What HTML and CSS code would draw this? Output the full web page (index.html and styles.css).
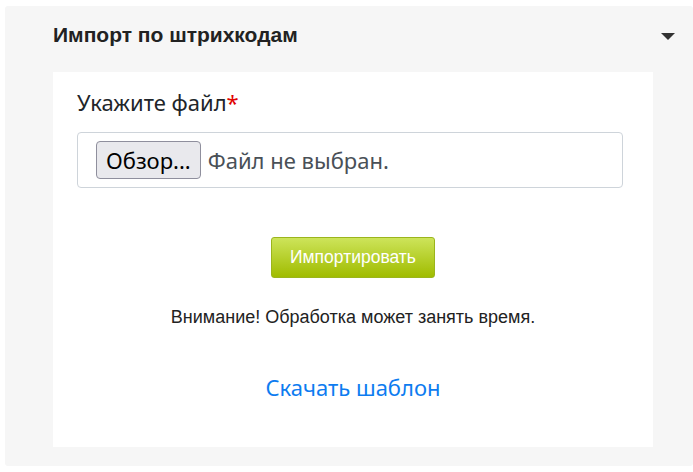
FILE: index.html
```html
<!DOCTYPE html>
<html lang="ru">
<head>
<meta charset="utf-8">
<link rel="stylesheet" href="styles.css">
</head>
<body>
<div class="panel">
  <div class="panel-header">
    <h2 class="panel-title">Импорт по штрихкодам</h2>
    <span class="caret"></span>
  </div>
  <div class="card">
    <div class="field-label">Укажите файл<span class="req">*</span></div>
    <div class="file-box">
      <span class="file-btn">Обзор...</span>
      <span class="file-name">Файл не выбран.</span>
    </div>
    <div class="actions">
      <span class="btn-import">Импортировать</span>
    </div>
    <p class="note">Внимание! Обработка может занять время.</p>
    <div class="template">
      <a class="template-link" href="#">Скачать шаблон</a>
    </div>
  </div>
</div>
</body>
</html>
```
FILE: styles.css
```css
html, body {
  margin: 0;
  padding: 0;
  background: #ffffff;
}
body {
  padding: 6px 0 0 5px;
}
.panel {
  background: #f6f6f6;
  border-radius: 3px;
  height: 460px;
  box-sizing: border-box;
  padding: 0 18px 19px 48px;
  display: flex;
  flex-direction: column;
}
.panel-header {
  height: 58px;
  margin-bottom: 8px;
  display: flex;
  align-items: center;
  justify-content: space-between;
}
.panel-title {
  margin: 0;
  font-family: "Liberation Sans", Arial, sans-serif;
  font-weight: bold;
  font-size: 21px;
  color: #222222;
}
.caret {
  width: 0;
  height: 0;
  border-left: 7px solid transparent;
  border-right: 7px solid transparent;
  border-top: 7px solid #333333;
  margin-top: 2px;
}
.card {
  background: #ffffff;
  width: 600px;
  flex: 1;
  box-sizing: border-box;
  padding: 14px 24px 0 24px;
  display: flex;
  flex-direction: column;
}
.field-label {
  font-family: "Noto Sans", "Open Sans", sans-serif;
  font-size: 22px;
  line-height: 32px;
  color: #212529;
}
.req {
  color: #e00000;
}
.file-box {
  margin-top: 14px;
  margin-right: 6px;
  height: 56px;
  box-sizing: border-box;
  border: 1px solid #ced4da;
  border-radius: 4px;
  display: flex;
  align-items: center;
  padding-left: 18px;
  font-family: "Noto Sans", "Open Sans", sans-serif;
  font-size: 22px;
}
.file-btn {
  height: 38px;
  box-sizing: border-box;
  padding: 0 9px;
  display: flex;
  align-items: center;
  background: #e9e9ed;
  border: 1px solid #8f8f9d;
  border-radius: 4px;
  color: #000000;
}
.file-name {
  margin-left: 7px;
  color: #495057;
}
.actions {
  margin-top: 49px;
  display: flex;
  justify-content: center;
}
.btn-import {
  width: 164px;
  height: 41px;
  box-sizing: border-box;
  display: flex;
  align-items: center;
  justify-content: center;
  background: linear-gradient(to bottom, #cde45a 0%, #a0bc00 100%);
  border: 1px solid #9bb51c;
  border-radius: 3px;
  color: #ffffff;
  font-family: "Liberation Sans", Arial, sans-serif;
  font-size: 17.5px;
}
.note {
  margin: 28px 0 0 0;
  text-align: center;
  font-family: "Liberation Sans", Arial, sans-serif;
  font-size: 18px;
  line-height: 22px;
  color: #222222;
}
.template {
  margin-top: 44px;
  text-align: center;
}
.template-link {
  font-family: "Noto Sans", "Open Sans", sans-serif;
  font-size: 22px;
  line-height: 30px;
  color: #0d7cf0;
  text-decoration: none;
}
```
